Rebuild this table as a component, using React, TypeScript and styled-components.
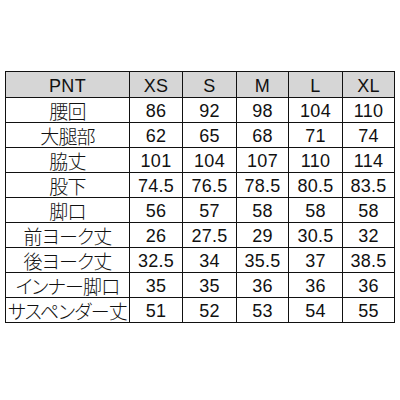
import React from "react";
import styled, { createGlobalStyle } from "styled-components";

const Global = createGlobalStyle`
  html, body { margin: 0; padding: 0; background: #ffffff; }
  body { font-family: "Liberation Sans", "Noto Sans CJK JP", sans-serif; }
`;

const Page = styled.div`
  width: 400px;
  height: 400px;
  padding: 71px 0 0 5px;
  box-sizing: border-box;
`;

const Table = styled.table`
  border-collapse: collapse;
  table-layout: fixed;
  width: 389px;
`;

const Cell = styled.td<{ $head?: boolean; $label?: boolean }>`
  border: 1px solid #111;
  height: ${(p) => (p.$head ? "26px" : "25px")};
  padding: 2px 0 0 0;
  box-sizing: border-box;
  text-align: center;
  vertical-align: middle;
  background: ${(p) => (p.$head ? "#d6d6d6" : "#ffffff")};
  color: #111;
  font-family: ${(p) =>
    p.$label && !p.$head
      ? `"Noto Sans CJK JP", sans-serif`
      : `"Liberation Sans", "Noto Sans CJK JP", sans-serif`};
  font-size: ${(p) => (p.$label && !p.$head ? "19px" : "18px")};
  font-weight: ${(p) => (p.$label && !p.$head ? 300 : 400)};
  font-feature-settings: "palt";
  line-height: 20px;
  white-space: nowrap;
  letter-spacing: ${(p) => (p.$label && !p.$head ? "-0.8px" : "0.3px")};
`;

const widths = [124, 53, 54, 52, 54, 52];
const header = ["PNT", "XS", "S", "M", "L", "XL"];
const rows: [string, string[]][] = [
  ["腰回", ["86", "92", "98", "104", "110"]],
  ["大腿部", ["62", "65", "68", "71", "74"]],
  ["脇丈", ["101", "104", "107", "110", "114"]],
  ["股下", ["74.5", "76.5", "78.5", "80.5", "83.5"]],
  ["脚口", ["56", "57", "58", "58", "58"]],
  ["前ヨーク丈", ["26", "27.5", "29", "30.5", "32"]],
  ["後ヨーク丈", ["32.5", "34", "35.5", "37", "38.5"]],
  ["インナー脚口", ["35", "35", "36", "36", "36"]],
  ["サスペンダー丈", ["51", "52", "53", "54", "55"]],
];

export default function App() {
  return (
    <>
      <Global />
      <Page>
        <Table>
          <colgroup>
            {widths.map((w, i) => (
              <col key={i} style={{ width: w }} />
            ))}
          </colgroup>
          <thead>
            <tr>
              {header.map((h, i) => (
                <Cell as="th" key={i} $head $label={i === 0}>
                  {h}
                </Cell>
              ))}
            </tr>
          </thead>
          <tbody>
            {rows.map(([label, vals]) => (
              <tr key={label}>
                <Cell $label>{label}</Cell>
                {vals.map((v, j) => (
                  <Cell key={j}>{v}</Cell>
                ))}
              </tr>
            ))}
          </tbody>
        </Table>
      </Page>
    </>
  );
}
